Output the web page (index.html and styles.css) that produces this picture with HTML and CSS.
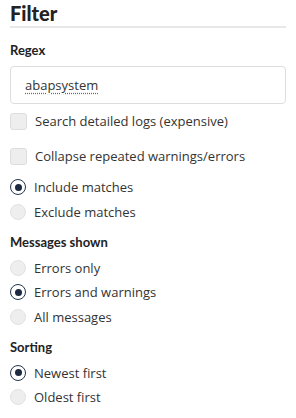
FILE: index.html
```html
<!DOCTYPE html>
<html>
<head>
<meta charset="utf-8">
<link rel="stylesheet" href="styles.css">
</head>
<body>
<div class="panel">
  <h1 class="title">Filter</h1>
  <div class="label">Regex</div>
  <div class="input"><span class="typed">abapsystem</span></div>

  <div class="check first"><span class="box"></span><span>Search detailed logs (expensive)</span></div>
  <div class="check second"><span class="box"></span><span>Collapse repeated warnings/errors</span></div>

  <div class="group g1">
    <div class="radio"><span class="dot on"></span><span>Include matches</span></div>
    <div class="radio"><span class="dot"></span><span>Exclude matches</span></div>
  </div>

  <div class="label sect">Messages shown</div>
  <div class="group">
    <div class="radio"><span class="dot"></span><span>Errors only</span></div>
    <div class="radio"><span class="dot on"></span><span>Errors and warnings</span></div>
    <div class="radio"><span class="dot"></span><span>All messages</span></div>
  </div>

  <div class="label sect">Sorting</div>
  <div class="group">
    <div class="radio"><span class="dot on"></span><span>Newest first</span></div>
    <div class="radio"><span class="dot"></span><span>Oldest first</span></div>
  </div>
</div>
</body>
</html>
```
FILE: styles.css
```css
html, body { margin: 0; padding: 0; background: #fff; }
body { font-family: "Open Sans", "Noto Sans", sans-serif; color: #333; }
.panel { padding: 0 10px; width: 276px; }
.title {
  margin: 0;
  font-family: Lato, "Open Sans", sans-serif;
  font-weight: 900;
  font-size: 20px;
  line-height: 26px;
  color: #222;
  border-bottom: 2px solid #e8e8e8;
  height: 26px;
}
.label {
  font-family: Lato, "Open Sans", sans-serif;
  font-weight: 700;
  font-size: 13px;
  color: #222;
  line-height: 16px;
  margin-top: 14px;
}
.input {
  margin-top: 8px;
  height: 36px;
  border: 1px solid #ddd;
  border-radius: 4px;
  display: flex;
  align-items: center;
  padding-left: 14px;
  font-size: 13px;
  color: #333;
}
.typed { text-decoration: underline dotted #e33; text-underline-offset: 3px; }
.check { display: flex; align-items: center; gap: 8px; font-size: 13px; height: 18px; }
.check.first { margin-top: 8px; }
.check.second { margin-top: 17px; }
.box {
  width: 15px; height: 15px;
  border: 1px solid #ddd;
  background: #eee;
  border-radius: 3px;
  flex: none;
}
.group { display: flex; flex-direction: column; gap: 6.5px; margin-top: 9px; }
.group.g1 { margin-top: 13px; }
.radio { display: flex; align-items: center; gap: 8px; font-size: 13px; height: 18px; }
.dot {
  border-radius: 50%;
  background: #eee;
  border: 1px solid #e2e2e2;
  flex: none;
  box-sizing: border-box;
  width: 16px; height: 16px;
}
.dot.on {
  background: #fff;
  border: 1.5px solid #23344f;
  position: relative;
}
.dot.on::after {
  content: "";
  position: absolute;
  left: 50%; top: 50%;
  width: 7px; height: 7px;
  margin: -3.5px 0 0 -3.5px;
  border-radius: 50%;
  background: #1c2940;
}
.label.sect { margin-top: 13px; }
```
